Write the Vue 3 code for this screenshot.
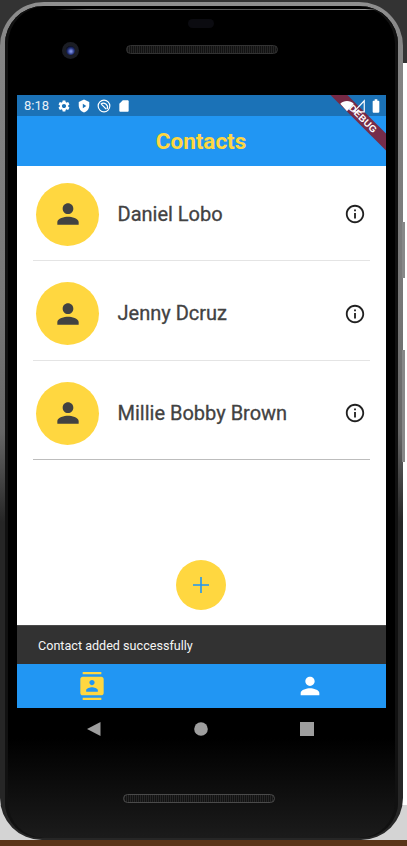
<script setup>
const contacts = ['Daniel Lobo', 'Jenny Dcruz', 'Millie Bobby Brown']

const person = 'M12 12c2.21 0 4-1.79 4-4s-1.79-4-4-4-4 1.79-4 4 1.79 4 4 4zm0 2c-2.67 0-8 1.34-8 4v2h16v-2c0-2.66-5.33-4-8-4z'
const info = 'M11 7h2v2h-2zm0 4h2v6h-2zm1-9C6.48 2 2 6.48 2 12s4.48 10 10 10 10-4.48 10-10S17.52 2 12 2zm0 18c-4.41 0-8-3.59-8-8s3.59-8 8-8 8 3.59 8 8-3.59 8-8 8z'
const gear = 'M19.14 12.94c.04-.3.06-.61.06-.94 0-.32-.02-.64-.07-.94l2.03-1.58c.18-.14.23-.41.12-.61l-1.92-3.32c-.12-.22-.37-.29-.59-.22l-2.39.96c-.5-.38-1.03-.7-1.62-.94l-.36-2.54c-.04-.24-.24-.41-.48-.41h-3.84c-.24 0-.43.17-.47.41l-.36 2.54c-.59.24-1.13.57-1.62.94l-2.39-.96c-.22-.08-.47 0-.59.22L2.74 8.87c-.12.21-.08.47.12.61l2.03 1.58c-.05.3-.09.63-.09.94s.02.64.07.94l-2.03 1.58c-.18.14-.23.41-.12.61l1.92 3.32c.12.22.37.29.59.22l2.39-.96c.5.38 1.03.7 1.62.94l.36 2.54c.05.24.24.41.48.41h3.84c.24 0 .44-.17.47-.41l.36-2.54c.59-.24 1.13-.56 1.62-.94l2.39.96c.22.08.47 0 .59-.22l1.92-3.32c.12-.22.07-.47-.12-.61l-2.01-1.58zM12 15.6c-1.98 0-3.6-1.62-3.6-3.6s1.62-3.6 3.6-3.6 3.6 1.62 3.6 3.6-1.62 3.6-3.6 3.6z'
const book = 'M20 0H4v2h16V0zM4 24h16v-2H4v2zM20 4H4c-1.1 0-2 .9-2 2v12c0 1.1.9 2 2 2h16c1.1 0 2-.9 2-2V6c0-1.1-.9-2-2-2zm-8 2.75c1.24 0 2.25 1.01 2.25 2.25s-1.01 2.25-2.25 2.25S9.75 10.24 9.75 9 10.76 6.75 12 6.75zM17 17H7v-1.5c0-1.67 3.33-2.5 5-2.5s5 .83 5 2.5V17z'
</script>

<template>
  <div class="stage">
    <div class="phone">
      <div class="body">
        <div class="top-bezel">
          <div class="glint"></div>
          <div class="sensor"></div>
          <div class="cam-row">
            <div class="camera"><span class="lens"></span></div>
            <div class="speaker"></div>
          </div>
        </div>

        <div class="screen">
          <div class="status">
            <span class="time">8:18</span>
            <svg class="st-icon" viewBox="0 0 24 24"><path :d="gear" /></svg>
            <svg class="st-icon" viewBox="0 0 24 24">
              <path d="M12 1L3 5v6c0 5.55 3.84 10.74 9 12 5.16-1.26 9-6.45 9-12V5l-9-4z" />
              <path class="cut" d="M10 8v8l6-4z" />
            </svg>
            <svg class="st-icon" viewBox="0 0 24 24">
              <circle class="ring" cx="12" cy="12" r="10" />
              <path class="ring" d="M6.5 9a7 7 0 0 1 11 8" />
              <path d="M8 8l9 9-2 1-8-8z" />
            </svg>
            <svg class="st-icon" viewBox="0 0 24 24">
              <path d="M18 2h-8L4 8v12c0 1.1.9 2 2 2h12c1.1 0 2-.9 2-2V4c0-1.1-.9-2-2-2z" />
            </svg>
            <span class="spacer"></span>
            <svg class="st-icon wifi" viewBox="0 0 24 24"><path d="M12 21L.5 8C3.5 5 7.5 3.5 12 3.5S20.5 5 23.5 8z" /></svg>
            <svg class="st-icon signal" viewBox="0 0 24 24"><path class="ring" d="M3 22h18V3z" /></svg>
            <svg class="st-icon battery" viewBox="0 0 24 24">
              <path d="M15.67 4H14V2h-4v2H8.33C7.6 4 7 4.6 7 5.33v15.33C7 21.4 7.6 22 8.33 22h7.33c.74 0 1.34-.6 1.34-1.33V5.33C17 4.6 16.4 4 15.67 4z" />
            </svg>
          </div>

          <header class="appbar">Contacts</header>

          <main class="content">
            <ul class="list">
              <li v-for="name in contacts" :key="name" class="row">
                <div class="avatar">
                  <svg width="32" height="32" viewBox="0 0 24 24"><path :d="person" /></svg>
                </div>
                <span class="name">{{ name }}</span>
                <svg class="info" width="22" height="22" viewBox="0 0 24 24"><path :d="info" /></svg>
              </li>
            </ul>
            <button class="fab" type="button">
              <svg width="24" height="24" viewBox="0 0 24 24">
                <path d="M20 12.8h-7.2V20h-1.6v-7.2H4v-1.6h7.2V4h1.6v7.2H20z" />
              </svg>
            </button>
          </main>

          <div class="snackbar">Contact added successfully</div>

          <nav class="bottom-nav">
            <svg class="active" width="28" height="28" viewBox="0 0 24 24"><path :d="book" /></svg>
            <svg class="idle" width="28" height="28" viewBox="0 0 24 24"><path :d="person" /></svg>
          </nav>

          <div class="ribbon">DEBUG</div>
        </div>

        <div class="nav-keys">
          <svg width="14" height="14" viewBox="0 0 14 14"><path d="M13.5 0v14L0 7z" /></svg>
          <svg width="14" height="14" viewBox="0 0 14 14"><circle cx="7" cy="7" r="6.8" /></svg>
          <svg width="14" height="14" viewBox="0 0 14 14"><path d="M0 0h14v14H0z" /></svg>
        </div>
        <div class="speaker low"></div>
      </div>
      <span class="side-btn power"></span>
      <span class="side-btn volume"></span>
    </div>
    <div class="desk"></div>
  </div>
</template>

<style scoped>
.stage {
  width: 407px;
  height: 846px;
  overflow: hidden;
  display: flex;
  flex-direction: column;
  font-family: Roboto, "Liberation Sans", sans-serif;
  background: linear-gradient(#333 0 63px, #fff 63px 805px, #d4d4d4 805px);
}

.phone {
  position: relative;
  box-sizing: border-box;
  width: 403px;
  height: 838px;
  margin-top: 2px;
  padding: 4px 5px 2px;
  border-radius: 44px 44px 42px 42px;
  background: linear-gradient(#8f8f8f 0, #858585 40px, #777 300px, #666 430px, #262626 520px, #262626);
}

.body {
  box-sizing: border-box;
  height: 100%;
  display: flex;
  flex-direction: column;
  border-radius: 38px 38px 36px 36px;
  background: linear-gradient(#000 0 88%, #1b1b1b);
  box-shadow: inset 3px 0 0 #111, inset -3px 0 0 #111;
}

.top-bezel {
  height: 89px;
  display: flex;
  flex-direction: column;
  padding-top: 3px;
  box-sizing: border-box;
}

.glint {
  height: 1px;
  margin: 0 20px 0 50px;
  background: linear-gradient(90deg, transparent, #777 10%, #555 60%, #999 96%, transparent);
}

.sensor {
  width: 26px;
  height: 9px;
  margin: 9px auto 0 183px;
  border-radius: 5px;
  background: #0b0b10;
}

.cam-row {
  display: flex;
  margin-top: 14px;
  padding-left: 57px;
}

.camera {
  width: 17px;
  height: 17px;
  border-radius: 50%;
  background: #1b1d24;
  display: flex;
  align-items: center;
  justify-content: center;
}

.lens {
  width: 9px;
  height: 9px;
  border-radius: 50%;
  background: radial-gradient(circle at 55% 60%, #7c8fe0 0 10%, #22307a 45%, #070a18 75%);
}

.speaker {
  width: 152px;
  height: 9px;
  margin: 3px 0 0 47px;
  box-sizing: border-box;
  border: 1px solid #333;
  border-radius: 5px;
  background: repeating-linear-gradient(90deg, #262626 0 1px, #121212 1px 2px);
}

.speaker.low {
  margin: 58px 0 0 118px;
  border-color: #4a4a4a;
}

.screen {
  position: relative;
  width: 369px;
  height: 613px;
  margin-left: 12px;
  display: flex;
  flex-direction: column;
  overflow: hidden;
  background: #fff;
}

.status {
  height: 21px;
  flex: none;
  display: flex;
  align-items: center;
  padding: 0 2.5px 0 7px;
  background: #1b72b7;
  color: #fff;
  font-size: 13px;
}

.time {
  width: 33px;
  opacity: .9;
}

.st-icon {
  width: 14px;
  height: 14px;
  margin-right: 6px;
  fill: #fff;
}

.st-icon .cut {
  fill: #1b72b7;
}

.st-icon .ring {
  fill: none;
  stroke: #fff;
  stroke-width: 2;
}

.spacer {
  flex: 1;
}

/* these two sit on top of the debug ribbon */
.st-icon.wifi {
  position: relative;
  z-index: 2;
  margin-right: -1.5px;
}

.st-icon.signal {
  position: relative;
  z-index: 2;
  margin-right: 1.5px;
}

.st-icon.battery {
  width: 16px;
  height: 16px;
  margin: 0;
}

.appbar {
  height: 50px;
  flex: none;
  box-sizing: border-box;
  display: flex;
  align-items: center;
  justify-content: center;
  padding-right: 1px;
  background: #2196f3;
  color: #ffd740;
  font-size: 22.5px;
  font-weight: 700;
}

.content {
  flex: 1;
  display: flex;
  flex-direction: column;
}

.list {
  list-style: none;
  margin: 0 16px;
  padding: 0;
}

.row {
  box-sizing: border-box;
  height: 99.5px;
  padding: 21px 4px 0 3px;
  display: flex;
  align-items: flex-start;
  border-bottom: 1px solid #e4e4e4;
}

.row:first-child {
  height: 95px;
  padding-top: 16.5px;
}

.row:last-child {
  border-bottom-color: #bdbdbd;
}

.avatar {
  width: 63px;
  height: 63px;
  flex: none;
  display: flex;
  align-items: center;
  justify-content: center;
  border-radius: 50%;
  background: #ffd740;
}

.avatar svg {
  fill: #424242;
}

.name {
  flex: 1;
  margin-left: 18.5px;
  line-height: 62px;
  font-size: 20px;
  font-weight: 400;
  color: #424242;
  -webkit-text-stroke: .3px #424242;
}

.info {
  margin-top: 20.5px;
  fill: #212121;
}

.fab {
  width: 50px;
  height: 50px;
  margin: auto 0 15px 159px;
  padding: 0;
  display: flex;
  align-items: center;
  justify-content: center;
  border: 0;
  border-radius: 50%;
  background: #ffd740;
}

.fab svg {
  fill: #2196f3;
}

.snackbar {
  height: 39px;
  flex: none;
  box-sizing: border-box;
  display: flex;
  align-items: center;
  padding-left: 21px;
  background: #323232;
  border-top: 1px solid #4a4a4a;
  color: #f5f5f5;
  font-size: 12.6px;
}

.bottom-nav {
  height: 44px;
  flex: none;
  box-sizing: border-box;
  display: flex;
  align-items: center;
  justify-content: space-between;
  padding: 0 62px 0 61px;
  background: #2196f3;
}

.active {
  fill: #ffd740;
}

.idle {
  fill: #fff;
}

.ribbon {
  position: absolute;
  left: 296px;
  top: 18px;
  width: 100px;
  height: 11.5px;
  line-height: 11.5px;
  text-align: center;
  transform: rotate(45deg);
  background: rgba(125, 35, 60, .93);
  color: #fff;
  font-family: "Liberation Sans", sans-serif;
  font-size: 9.5px;
  font-weight: 700;
  letter-spacing: .2px;
}

.nav-keys {
  display: flex;
  justify-content: space-between;
  width: 227px;
  margin: 14px 0 0 82px;
}

.nav-keys svg {
  fill: #9e9e9e;
}

.side-btn {
  position: absolute;
  left: 402px;
  width: 3px;
  background: #888;
}

.power {
  top: 220px;
  height: 56px;
}

.volume {
  top: 348px;
  height: 112px;
}

.desk {
  flex: 1;
  background: #5a3418;
}
</style>
